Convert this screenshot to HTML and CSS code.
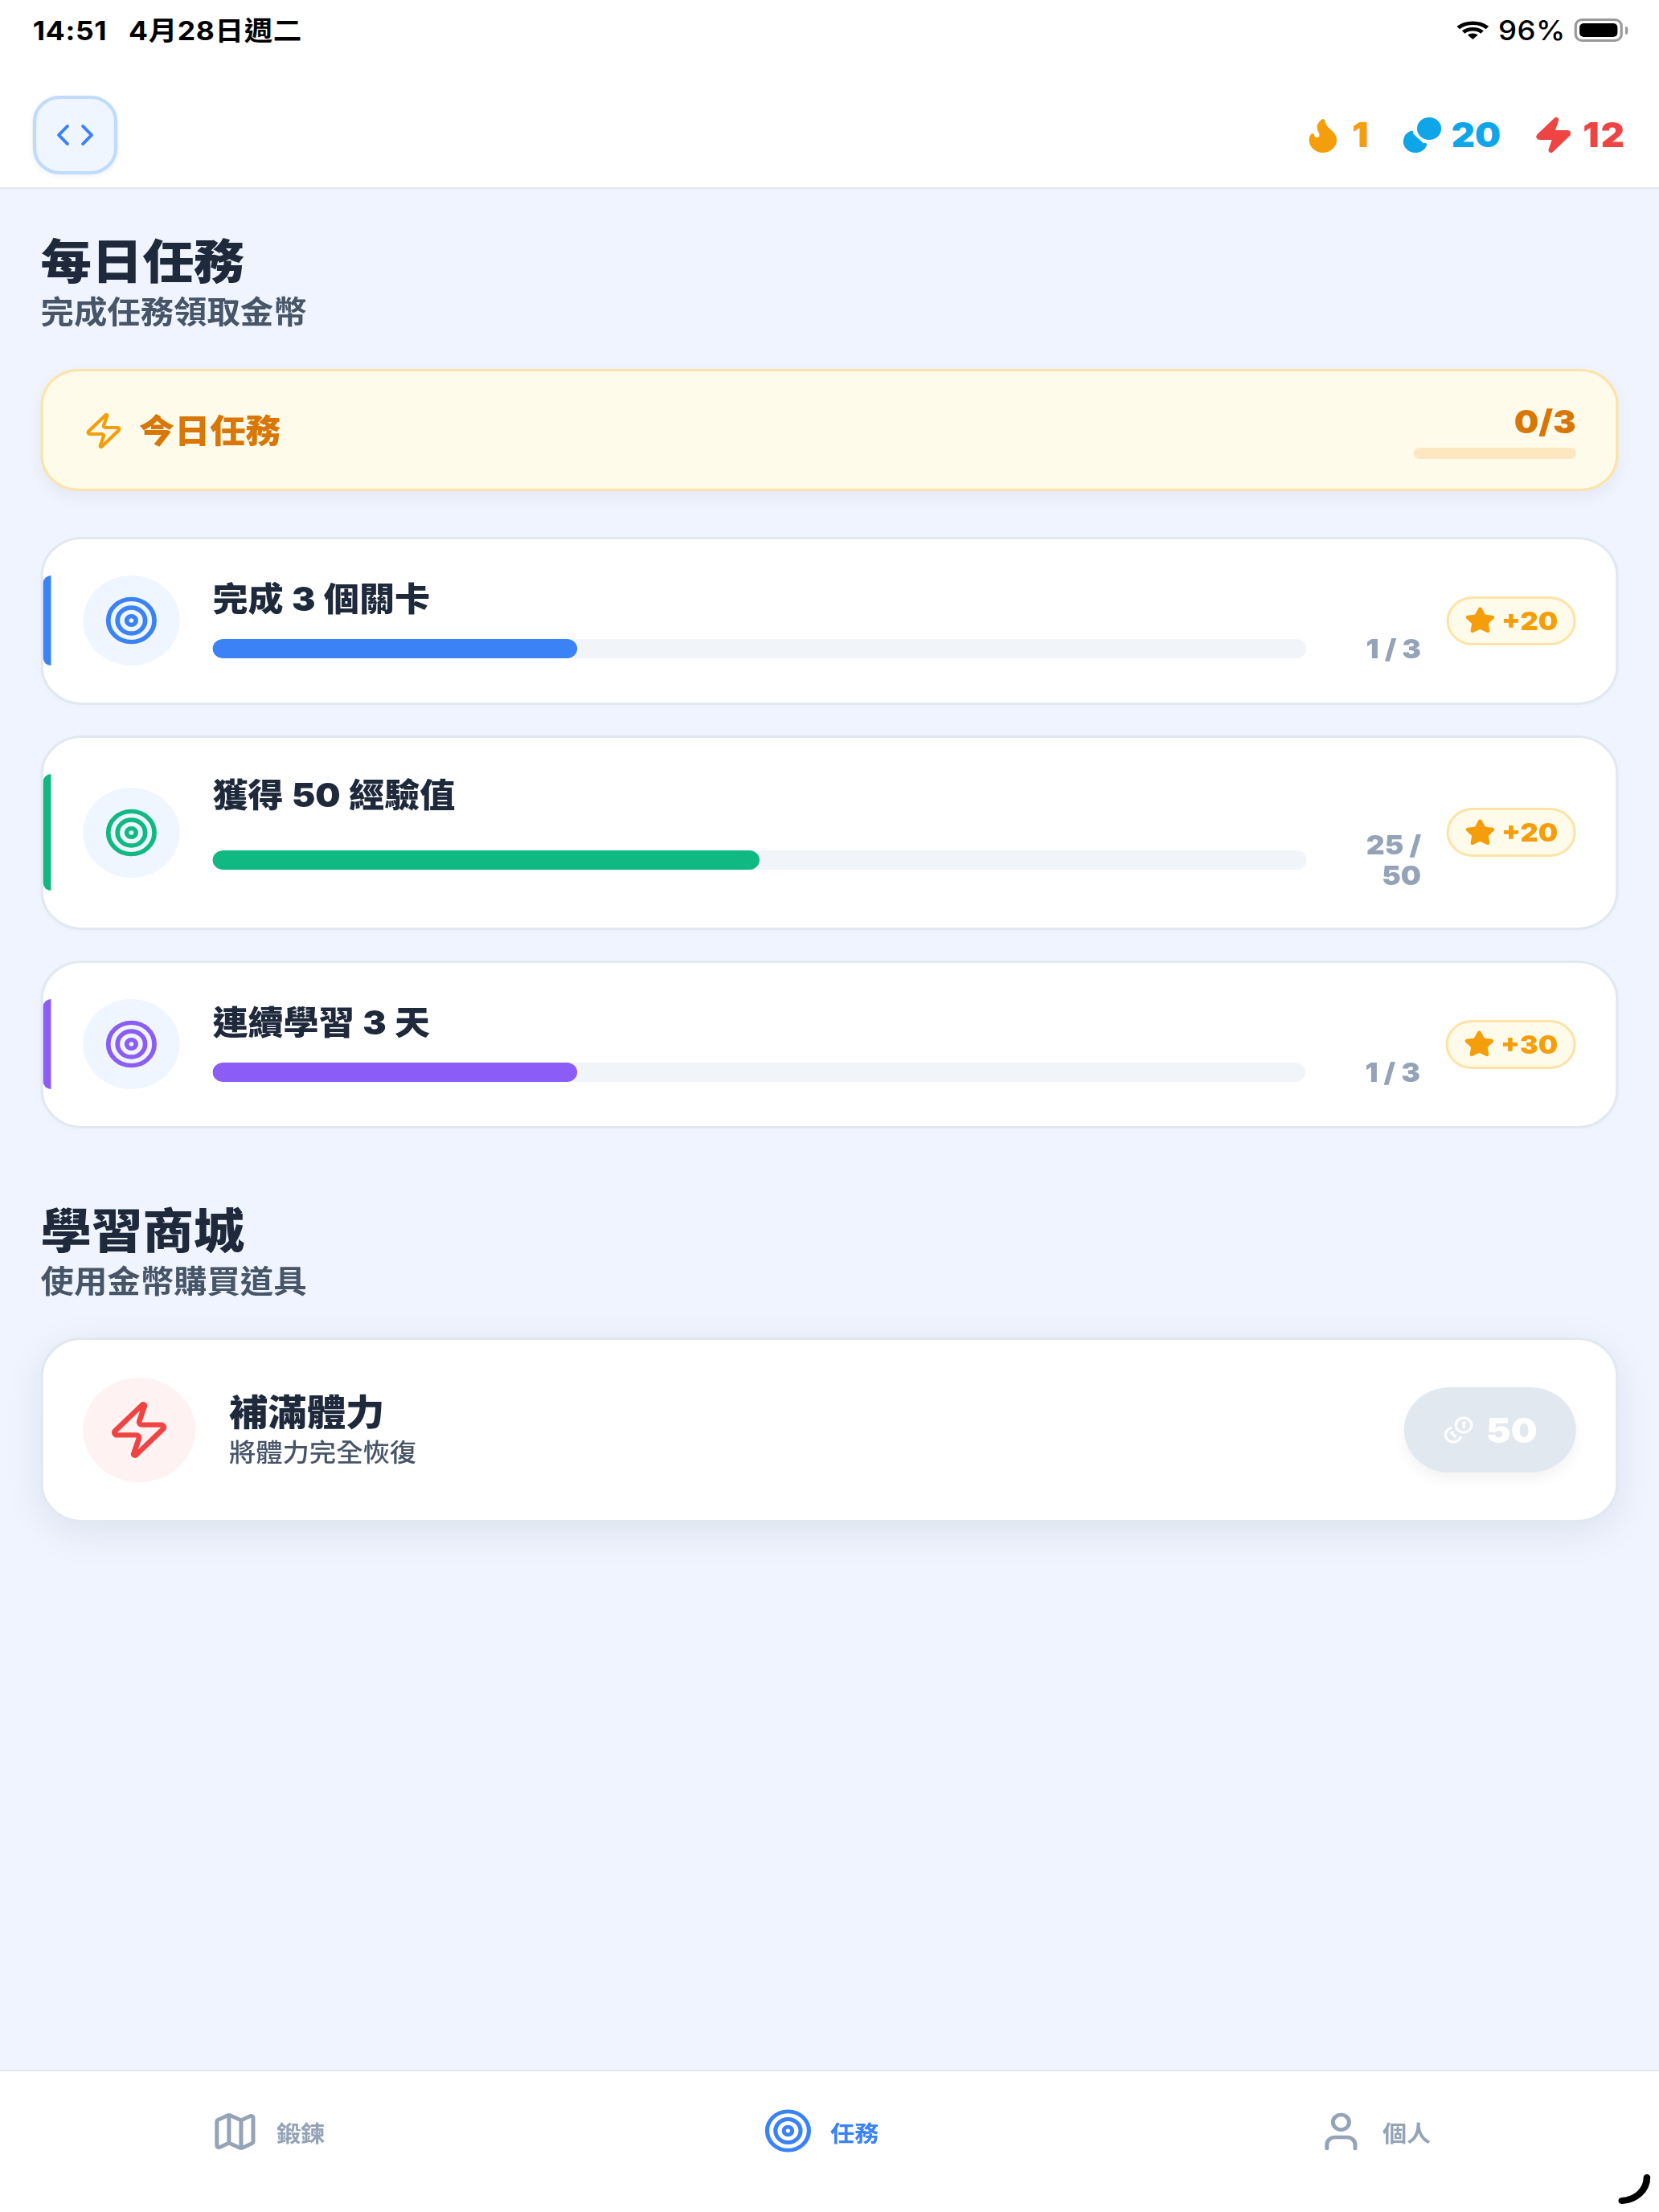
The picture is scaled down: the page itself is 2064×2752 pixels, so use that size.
FILE: index.html
```html
<!DOCTYPE html>
<html lang="zh-Hant">
<head>
<meta charset="utf-8">
<title>每日任務</title>
<link rel="stylesheet" href="styles.css">
</head>
<body>
<div class="app">
  <header class="top">
    <div class="status">
      <div class="status-left"><span>14:51</span><span>4月28日週二</span></div>
      <div class="status-right">
        <svg class="wifi" viewBox="0 0 34 24" preserveAspectRatio="none"><path d="M1.5 8.5C10 .7 24 .7 32.5 8.5" /><path d="M7 14c5.600-5 14.400-5 20 0" /><path class="wifi-dot" d="M17 23l-5.500-5.500c3-2.700 8-2.700 11 0z"/></svg>
        <span class="pct">96%</span>
        <div class="battery"><div class="battery-fill"></div></div>
        <div class="battery-cap"></div>
      </div>
    </div>
    <div class="bar">
      <button class="code-btn"><svg class="ico ico-code" viewBox="0 0 24 24"><path d="M7.500 6.500 2.500 12l5 5.500"/><path d="M16.500 6.500l5 5.500-5 5.500"/></svg></button>
      <div class="stats">
        <div class="stat stat-fire"><svg class="ico ico-48 solid" viewBox="0 0 24 24"><path d="M8.500 14.500A2.500 2.500 0 0 0 11 12c0-1.380-.5-2-1-3-1.072-2.143-.224-4.054 2-6 .5 2.500 2 4.900 4 6.500 2 1.600 3 3.500 3 5.500a7 7 0 1 1-14 0c0-1.153.433-2.294 1-3a2.500 2.500 0 0 0 2.500 2.500z"/></svg><span>1</span></div>
        <div class="stat stat-coin"><svg class="ico ico-48 solid" viewBox="0 0 24 24"><g transform="translate(24 0) scale(-1 1)"><circle cx="8" cy="8" r="6"/><path d="M18.090 10.370A6 6 0 1 1 10.340 18"/></g></svg><span>20</span></div>
        <div class="stat stat-bolt"><svg class="ico ico-48 solid" viewBox="0 0 24 24"><path d="M4 14a1 1 0 0 1-.78-1.630l9.900-10.200a.5.5 0 0 1 .86.460l-1.920 6.020A1 1 0 0 0 13 10h7a1 1 0 0 1 .78 1.630l-9.900 10.200a.5.5 0 0 1-.86-.460l1.920-6.020A1 1 0 0 0 11 14z"/></svg><span>12</span></div>
      </div>
    </div>
  </header>

  <main class="main">
    <section class="section section-tasks">
      <h2 class="h">每日任務</h2>
      <p class="sub">完成任務領取金幣</p>
      <div class="banner">
        <div class="banner-left">
          <svg class="ico ico-48" viewBox="0 0 24 24"><path d="M4 14a1 1 0 0 1-.78-1.630l9.900-10.200a.5.5 0 0 1 .86.460l-1.920 6.020A1 1 0 0 0 13 10h7a1 1 0 0 1 .78 1.630l-9.900 10.200a.5.5 0 0 1-.86-.460l1.920-6.020A1 1 0 0 0 11 14z"/></svg>
          <span>今日任務</span>
        </div>
        <div class="banner-right">
          <div class="banner-num">0/3</div>
          <div class="banner-track"></div>
        </div>
      </div>
      <div class="tasks">
        <article class="card task blue">
          <i class="accent"></i>
          <div class="disc"><svg class="ico ico-64" viewBox="0 0 24 24"><circle cx="12" cy="12" r="10"/><circle cx="12" cy="12" r="6"/><circle cx="12" cy="12" r="2"/></svg></div>
          <div class="task-body">
            <div class="task-title">完成 3 個關卡</div>
            <div class="task-row">
              <div class="track"><div class="fill" style="width:33.33%"></div></div>
              <div class="count">1 / 3</div>
            </div>
          </div>
          <div class="reward"><svg class="star" viewBox="0 0 24 24"><path d="M11.525 2.295a.53.53 0 0 1 .95 0l2.310 4.679a2.123 2.123 0 0 0 1.595 1.160l5.166.756a.53.53 0 0 1 .294.904l-3.736 3.638a2.123 2.123 0 0 0-.611 1.878l.882 5.140a.53.53 0 0 1-.771.560l-4.618-2.428a2.122 2.122 0 0 0-1.973 0L6.396 21.010a.53.53 0 0 1-.770-.560l.881-5.139a2.122 2.122 0 0 0-.611-1.879L2.160 9.795a.53.53 0 0 1 .294-.906l5.165-.755a2.122 2.122 0 0 0 1.597-1.160z"/></svg><span>+20</span></div>
        </article>
        <article class="card task green">
          <i class="accent"></i>
          <div class="disc"><svg class="ico ico-64" viewBox="0 0 24 24"><circle cx="12" cy="12" r="10"/><circle cx="12" cy="12" r="6"/><circle cx="12" cy="12" r="2"/></svg></div>
          <div class="task-body">
            <div class="task-title">獲得 50 經驗值</div>
            <div class="task-row">
              <div class="track"><div class="fill" style="width:50%"></div></div>
              <div class="count">25 / 50</div>
            </div>
          </div>
          <div class="reward"><svg class="star" viewBox="0 0 24 24"><path d="M11.525 2.295a.53.53 0 0 1 .95 0l2.310 4.679a2.123 2.123 0 0 0 1.595 1.160l5.166.756a.53.53 0 0 1 .294.904l-3.736 3.638a2.123 2.123 0 0 0-.611 1.878l.882 5.140a.53.53 0 0 1-.771.560l-4.618-2.428a2.122 2.122 0 0 0-1.973 0L6.396 21.010a.53.53 0 0 1-.770-.560l.881-5.139a2.122 2.122 0 0 0-.611-1.879L2.160 9.795a.53.53 0 0 1 .294-.906l5.165-.755a2.122 2.122 0 0 0 1.597-1.160z"/></svg><span>+20</span></div>
        </article>
        <article class="card task purple">
          <i class="accent"></i>
          <div class="disc"><svg class="ico ico-64" viewBox="0 0 24 24"><circle cx="12" cy="12" r="10"/><circle cx="12" cy="12" r="6"/><circle cx="12" cy="12" r="2"/></svg></div>
          <div class="task-body">
            <div class="task-title">連續學習 3 天</div>
            <div class="task-row">
              <div class="track"><div class="fill" style="width:33.33%"></div></div>
              <div class="count">1 / 3</div>
            </div>
          </div>
          <div class="reward"><svg class="star" viewBox="0 0 24 24"><path d="M11.525 2.295a.53.53 0 0 1 .95 0l2.310 4.679a2.123 2.123 0 0 0 1.595 1.160l5.166.756a.53.53 0 0 1 .294.904l-3.736 3.638a2.123 2.123 0 0 0-.611 1.878l.882 5.140a.53.53 0 0 1-.771.560l-4.618-2.428a2.122 2.122 0 0 0-1.973 0L6.396 21.010a.53.53 0 0 1-.770-.560l.881-5.139a2.122 2.122 0 0 0-.611-1.879L2.160 9.795a.53.53 0 0 1 .294-.906l5.165-.755a2.122 2.122 0 0 0 1.597-1.160z"/></svg><span>+30</span></div>
        </article>
      </div>
    </section>

    <section class="section section-shop">
      <h2 class="h">學習商城</h2>
      <p class="sub">使用金幣購買道具</p>
      <article class="card shop">
        <div class="disc disc-red"><svg class="ico ico-76" viewBox="0 0 24 24"><path d="M4 14a1 1 0 0 1-.78-1.630l9.900-10.200a.5.5 0 0 1 .86.460l-1.920 6.020A1 1 0 0 0 13 10h7a1 1 0 0 1 .78 1.630l-9.900 10.200a.5.5 0 0 1-.86-.460l1.920-6.020A1 1 0 0 0 11 14z"/></svg></div>
        <div class="shop-body">
          <div class="shop-title">補滿體力</div>
          <div class="shop-sub">將體力完全恢復</div>
        </div>
        <button class="buy"><svg class="ico ico-36" viewBox="0 0 24 24"><g transform="translate(24 0) scale(-1 1)"><circle cx="8" cy="8" r="6"/><path d="M18.090 10.370A6 6 0 1 1 10.340 18"/><path d="M7 6h1v4"/><path d="m16.710 13.880.7.710-2.820 2.820"/></g></svg><span>50</span></button>
      </article>
    </section>
  </main>

  <nav class="nav">
    <div class="nav-item">
      <svg class="ico ico-56" viewBox="0 0 24 24"><path d="M14.106 5.553a2 2 0 0 0 1.788 0l3.659-1.830A1 1 0 0 1 21 4.619v12.764a1 1 0 0 1-.553.894l-4.553 2.277a2 2 0 0 1-1.788 0l-4.212-2.106a2 2 0 0 0-1.788 0l-3.659 1.830A1 1 0 0 1 3 19.381V6.618a1 1 0 0 1 .553-.894l4.553-2.277a2 2 0 0 1 1.788 0z"/><path d="M15 5.764v15"/><path d="M9 3.236v15"/></svg>
      <span>鍛鍊</span>
    </div>
    <div class="nav-item active">
      <svg class="ico ico-58" viewBox="0 0 24 24"><circle cx="12" cy="12" r="10"/><circle cx="12" cy="12" r="6"/><circle cx="12" cy="12" r="2"/></svg>
      <span>任務</span>
    </div>
    <div class="nav-item">
      <svg class="ico ico-56" viewBox="0 0 24 24"><path d="M19 21v-2a4 4 0 0 0-4-4H9a4 4 0 0 0-4 4v2"/><circle cx="12" cy="7" r="4"/></svg>
      <span>個人</span>
    </div>
  </nav>
  <svg class="corner" viewBox="0 0 40 40"><path d="M34 5C34 20 22 33 5 34"/></svg>
</div>
</body>
</html>
```

FILE: styles.css
```css
* { box-sizing: border-box; }
html, body { margin: 0; padding: 0; overflow: hidden; }
body {
  width: 1920px;
  height: 2752px;
  transform: scaleX(1.075);
  transform-origin: 0 0;
  font-family: "Inter", "Noto Sans CJK TC", sans-serif;
  color: #1e293b;
  background: #eff4ff;
}
.app { position: relative; display: flex; flex-direction: column; height: 2752px; }
.ico { fill: none; stroke: currentColor; stroke-width: 2; stroke-linecap: round; stroke-linejoin: round; flex: none; display: block; }
.ico-36 { width: 36px; height: 36px; }
.ico-48 { width: 48px; height: 48px; }
.ico-56 { width: 56px; height: 56px; }
.ico-58 { width: 58px; height: 58px; }
.ico-64 { width: 64px; height: 64px; }
.ico-76 { width: 76px; height: 76px; }
.solid { fill: currentColor; }

.top { background: #fff; border-bottom: 2px solid #e2e8f0; height: 235px; }
.status { height: 75px; display: flex; align-items: center; justify-content: space-between; padding: 0 36px 0 38px; font-size: 33px; line-height: 40px; color: #000; }
.status-left { display: flex; gap: 25px; font-weight: 700; letter-spacing: .6px; }
.status-right { display: flex; align-items: center; }
.wifi { width: 37px; height: 24px; fill: none; stroke: #000; stroke-width: 4.500; margin-right: 11px; }
.wifi-dot { fill: #000; stroke: none; }
.pct { font-weight: 500; font-size: 34px; letter-spacing: .5px; margin-right: 10px; }
.battery { width: 56px; height: 29px; border: 3px solid #999; border-radius: 9px; padding: 3px; }
.battery-fill { width: 100%; height: 100%; background: #000; border-radius: 5px; }
.battery-cap { width: 3px; height: 10px; background: #999; margin-left: 3px; border-radius: 0 3px 3px 0; }

.bar { display: flex; align-items: center; justify-content: space-between; padding: 44px 38px 16px; }
.code-btn { width: 98px; height: 98px; background: #eff6ff; border: 4px solid #bfdbfe; border-radius: 32px; color: #3b82f6; display: flex; align-items: center; justify-content: center; padding: 0; box-shadow: 0 2px 6px rgba(15,23,42,.06); }
.ico-code { width: 48px; height: 48px; stroke-width: 1.900; }
.stats { display: flex; align-items: center; font-size: 42px; font-weight: 900; line-height: 48px; }
.stat { display: flex; align-items: center; gap: 10px; }
.stat-fire { color: #f59e0b; }
.stat-coin { color: #0ea5e9; margin-left: 38px; }
.stat-bolt { color: #ef4444; margin-left: 37px; }
.stat-bolt span { letter-spacing: 2px; }

.main { flex: 1; padding: 55px 47px 0; }
.h { margin: 0; font-size: 59px; line-height: 72px; font-weight: 900; color: #1e293b; }
.sub { margin: 0 0 45px; font-size: 38.500px; line-height: 52px; font-weight: 700; color: #475569; }

.banner { height: 152px; background: #fffbeb; border: 3px solid #fde3a7; border-radius: 44px; display: flex; align-items: center; justify-content: space-between; padding: 2px 46px 0; box-shadow: 0 8px 20px rgba(15,23,42,.05); margin-bottom: 57px; }
.banner-left { display: flex; align-items: center; gap: 17px; color: #f59e0b; }
.banner-left span { color: #d97706; font-size: 41px; line-height: 56px; font-weight: 900; }
.banner-right { display: flex; flex-direction: column; align-items: flex-end; width: 188px; }
.banner-num { font-size: 40px; line-height: 48px; font-weight: 900; color: #d97706; }
.banner-track { width: 100%; height: 14px; margin-top: 8px; background: #fde7c0; border-radius: 7px; }

.tasks { display: flex; flex-direction: column; gap: 38px; }
.card { position: relative; background: #fff; border: 3px solid #e2e8f0; border-radius: 48px; display: flex; align-items: center; padding: 45px 46px 46px; }
.task { box-shadow: 0 2px 6px rgba(15,23,42,.02); }
.accent { position: absolute; left: 0; top: 45px; bottom: 46px; width: 9px; border-radius: 12px 0 0 12px; background: var(--tone); }
.blue { --tone: #3b82f6; }
.green { --tone: #10b981; }
.purple { --tone: #8b5cf6; }
.disc { width: 112px; height: 112px; border-radius: 50%; background: #eff6ff; display: flex; align-items: center; justify-content: center; flex: none; color: var(--tone); }
.task-body { flex: 1; min-width: 0; margin-left: 38px; }
.task-title { font-size: 41px; line-height: 53px; word-spacing: 1.500px; font-weight: 900; color: #1e293b; margin-bottom: 16px; }
.task-row { display: flex; align-items: center; gap: 49px; }
.track { flex: 1; height: 24px; background: #f1f5f9; border-radius: 12px; overflow: hidden; }
.fill { height: 100%; background: var(--tone); border-radius: 12px; }
.count { width: 84px; flex: none; text-align: right; font-size: 33px; line-height: 38px; font-weight: 900; color: #94a3b8; }
.reward { flex: none; margin-left: 29px; height: 61px; display: flex; align-items: center; gap: 7px; padding: 0 18px; background: #fffbeb; border: 3px solid #fde3a7; border-radius: 31px; font-size: 32px; font-weight: 900; color: #f59e0b; }
.star { width: 36px; height: 36px; fill: currentColor; stroke: currentColor; stroke-width: 2; stroke-linejoin: round; flex: none; }

.section-shop { margin-top: 92px; }
.section-shop .sub { margin-bottom: 44px; }
.shop { padding: 47px 46px; box-shadow: 0 12px 48px rgba(15,23,42,.08); }
.disc-red { width: 130px; height: 130px; background: #fef2f2; color: #ef4444; }
.shop-body { flex: 1; margin-left: 39px; }
.shop-title { font-size: 45px; line-height: 55px; font-weight: 900; color: #1e293b; }
.shop-sub { font-size: 31px; line-height: 44px; font-weight: 500; color: #475569; }
.buy { width: 199px; height: 106px; border: 0; border-radius: 53px; background: #e2e8f0; color: #fff; display: flex; align-items: center; justify-content: center; gap: 14px; padding: 0; font-family: inherit; font-size: 43px; font-weight: 900; box-shadow: 0 8px 16px rgba(15,23,42,.05); }

.nav { height: 177px; background: #fff; border-top: 2px solid #e2e8f0; display: grid; grid-template-columns: repeat(3, 1fr); padding-top: 47px; }
.nav-item { display: flex; align-items: flex-start; justify-content: center; gap: 20px; padding-right: 20px; color: #94a3b8; font-size: 28px; font-weight: 700; line-height: 56px; }
.nav-item span { padding-top: 3px; }
.nav-item.active { color: #3b82f6; }
.nav-item.active .ico { margin-top: -2px; }
.corner { position: absolute; left: 1872px; top: 2704px; width: 40px; height: 40px; fill: none; stroke: #000; stroke-width: 8; stroke-linecap: round; }
```
